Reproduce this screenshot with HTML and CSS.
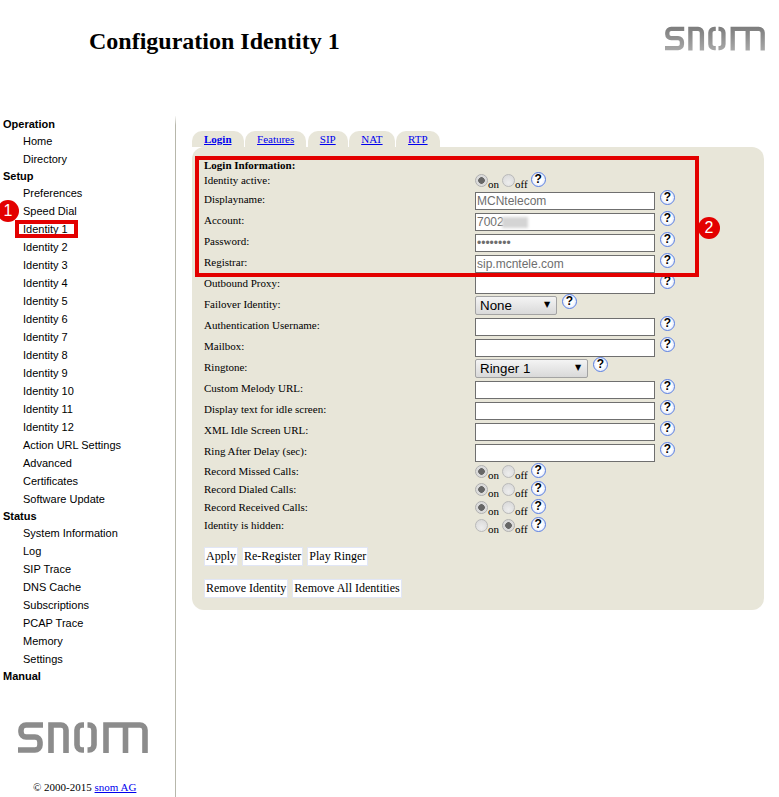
FILE: index.html
```html
<!DOCTYPE html>
<html lang="en">
<head>
<meta charset="utf-8">
<title>Configuration Identity 1</title>
<link rel="stylesheet" href="styles.css">
</head>
<body>
<svg class="defs" width="0" height="0" aria-hidden="true">
  <defs>
    <linearGradient id="fade" gradientUnits="userSpaceOnUse" x1="0" y1="0" x2="0" y2="31">
      <stop class="fade-start" offset="0"/>
      <stop class="fade-end" offset="1"/>
    </linearGradient>
  </defs>
  <symbol id="snom" viewBox="0 0 130 31">
    <path d="M25 3H8a5 5 0 0 0-5 5V10a5 5 0 0 0 5 5H17a5 5 0 0 1 5 5v3a5 5 0 0 1-5 5H0"/>
    <path d="M33 31V3H43a5 5 0 0 1 5 5V31"/>
    <path d="M66 3H64a5 5 0 0 0-5 5V23a5 5 0 0 0 5 5H66"/>
    <path d="M69.5 3H71a5 5 0 0 1 5 5V23a5 5 0 0 1-5 5H69.5"/>
    <path d="M88 31V3H122a5 5 0 0 1 5 5V31M107.5 3V31"/>
  </symbol>
</svg>
<header class="top">
  <h1 class="title">Configuration Identity 1</h1>
  <svg class="logo logo-top"><use href="#snom"/></svg>
</header>
<div class="layout">
  <aside class="sidebar">
    <nav class="nav">
      <div class="nav-head">Operation</div>
      <div class="nav-item">Home</div>
      <div class="nav-item">Directory</div>
      <div class="nav-head">Setup</div>
      <div class="nav-item">Preferences</div>
      <div class="nav-item">Speed Dial<span class="badge badge-one">1</span></div>
      <div class="nav-item nav-marked">Identity 1</div>
      <div class="nav-item">Identity 2</div>
      <div class="nav-item">Identity 3</div>
      <div class="nav-item">Identity 4</div>
      <div class="nav-item">Identity 5</div>
      <div class="nav-item">Identity 6</div>
      <div class="nav-item">Identity 7</div>
      <div class="nav-item">Identity 8</div>
      <div class="nav-item">Identity 9</div>
      <div class="nav-item">Identity 10</div>
      <div class="nav-item">Identity 11</div>
      <div class="nav-item">Identity 12</div>
      <div class="nav-item">Action URL Settings</div>
      <div class="nav-item">Advanced</div>
      <div class="nav-item">Certificates</div>
      <div class="nav-item">Software Update</div>
      <div class="nav-head">Status</div>
      <div class="nav-item">System Information</div>
      <div class="nav-item">Log</div>
      <div class="nav-item">SIP Trace</div>
      <div class="nav-item">DNS Cache</div>
      <div class="nav-item">Subscriptions</div>
      <div class="nav-item">PCAP Trace</div>
      <div class="nav-item">Memory</div>
      <div class="nav-item">Settings</div>
      <div class="nav-head">Manual</div>
    </nav>
    <svg class="logo logo-side"><use href="#snom"/></svg>
    <p class="copyright">© 2000-2015 <a href="#">snom AG</a></p>
  </aside>
  <main class="main">
    <div class="tabs">
      <a class="tab tab-active" href="#">Login</a>
      <a class="tab" href="#">Features</a>
      <a class="tab" href="#">SIP</a>
      <a class="tab" href="#">NAT</a>
      <a class="tab" href="#">RTP</a>
    </div>
    <section class="panel">
      <div class="marker"></div>
      <span class="badge badge-two">2</span>
      <div class="section-title">Login Information:</div>

      <div class="row row-radio"><span class="label">Identity active:</span><div class="value">
        <input class="radio" type="radio" name="r1" checked><span class="opt">on</span>
        <input class="radio" type="radio" name="r1"><span class="opt">off</span><span class="help">?</span></div></div>

      <div class="row"><span class="label">Displayname:</span><div class="value"><input class="text" type="text" value="MCNtelecom"><span class="help help-text">?</span></div></div>
      <div class="row"><span class="label">Account:</span><div class="value"><span class="field"><input class="text" type="text" value="7002"><span class="smudge"></span></span><span class="help help-text">?</span></div></div>
      <div class="row"><span class="label">Password:</span><div class="value"><input class="text" type="password" value="password"><span class="help help-text">?</span></div></div>
      <div class="row"><span class="label">Registrar:</span><div class="value"><input class="text" type="text" value="sip.mcntele.com"><span class="help help-text">?</span></div></div>
      <div class="row"><span class="label">Outbound Proxy:</span><div class="value"><input class="text" type="text"><span class="help help-text">?</span></div></div>
      <div class="row"><span class="label">Failover Identity:</span><div class="value"><select class="select select-short"><option>None</option></select><span class="help help-select">?</span></div></div>
      <div class="row"><span class="label">Authentication Username:</span><div class="value"><input class="text" type="text"><span class="help help-text">?</span></div></div>
      <div class="row"><span class="label">Mailbox:</span><div class="value"><input class="text" type="text"><span class="help help-text">?</span></div></div>
      <div class="row"><span class="label">Ringtone:</span><div class="value"><select class="select select-long"><option>Ringer 1</option></select><span class="help help-select">?</span></div></div>
      <div class="row"><span class="label">Custom Melody URL:</span><div class="value"><input class="text" type="text"><span class="help help-text">?</span></div></div>
      <div class="row"><span class="label">Display text for idle screen:</span><div class="value"><input class="text" type="text"><span class="help help-text">?</span></div></div>
      <div class="row"><span class="label">XML Idle Screen URL:</span><div class="value"><input class="text" type="text"><span class="help help-text">?</span></div></div>
      <div class="row"><span class="label">Ring After Delay (sec):</span><div class="value"><input class="text" type="text"><span class="help help-text">?</span></div></div>

      <div class="row row-radio"><span class="label">Record Missed Calls:</span><div class="value">
        <input class="radio" type="radio" name="r2" checked><span class="opt">on</span>
        <input class="radio" type="radio" name="r2"><span class="opt">off</span><span class="help">?</span></div></div>
      <div class="row row-radio"><span class="label">Record Dialed Calls:</span><div class="value">
        <input class="radio" type="radio" name="r3" checked><span class="opt">on</span>
        <input class="radio" type="radio" name="r3"><span class="opt">off</span><span class="help">?</span></div></div>
      <div class="row row-radio"><span class="label">Record Received Calls:</span><div class="value">
        <input class="radio" type="radio" name="r4" checked><span class="opt">on</span>
        <input class="radio" type="radio" name="r4"><span class="opt">off</span><span class="help">?</span></div></div>
      <div class="row row-radio"><span class="label">Identity is hidden:</span><div class="value">
        <input class="radio" type="radio" name="r5"><span class="opt">on</span>
        <input class="radio" type="radio" name="r5" checked><span class="opt">off</span><span class="help">?</span></div></div>

      <div class="actions">
        <button class="btn" type="button">Apply</button>
        <button class="btn" type="button">Re-Register</button>
        <button class="btn" type="button">Play Ringer</button>
      </div>
      <div class="actions actions-second">
        <button class="btn" type="button">Remove Identity</button>
        <button class="btn" type="button">Remove All Identities</button>
      </div>
    </section>
  </main>
</div>
</body>
</html>
```
FILE: styles.css
```css
*, *::before, *::after { box-sizing: border-box; }
html, body { margin: 0; padding: 0; height: 797px; overflow: hidden; background: #fff; }
body { font-family: "Liberation Serif", serif; font-size: 11px; color: #000; }
.defs { position: absolute; }
.fade-start { stop-color: #7c7c7c; }
.fade-end { stop-color: #a8a8a8; }

.top { height: 116px; display: flex; justify-content: space-between; align-items: flex-start; }
.title { margin: 27px 0 0 89px; font-size: 24px; line-height: 28px; font-weight: bold; }
.logo { display: block; fill: none; stroke: #8c8c8c; stroke-width: 5.6; }
.logo-top { width: 100px; height: 25px; margin: 26px 14px 0 0; stroke: url(#fade); }
.logo-side { width: 130px; height: 31px; margin: 38px 0 0 18px; }

.layout { display: flex; height: 681px; }
.sidebar { width: 176px; flex: none; border-right: 1px solid #b7b7ab; border-image: linear-gradient(#fff, #b7b7ab 10px) 1; }
.nav { font-family: "Liberation Sans", sans-serif; font-size: 11px; }
.nav-head { height: 16px; line-height: 16px; padding-left: 3px; font-weight: bold; }
.nav-item { height: 18px; line-height: 18px; padding-left: 23px; position: relative; }
.nav-marked::after { content: ""; position: absolute; left: 15px; top: 0; width: 63px; height: 18px; border: 4px solid #e30000; }
.badge { position: absolute; width: 22px; height: 22px; border-radius: 50%; background: #e30000; color: #fff;
  font-family: "Liberation Sans", sans-serif; font-size: 16px; line-height: 22px; text-align: center; font-weight: normal; }
.badge-one { left: -3px; top: -2px; }
.badge-two { left: 506px; top: 70px; }
.copyright { margin: 28px 0 0 33px; font-size: 11px; line-height: 13px; }
a { color: #0000ee; }

.main { padding-left: 16px; width: 588px; flex: none; }
.tabs { display: flex; gap: 1.5px; height: 31px; padding-top: 15px; }
.tab { height: 16px; padding: 2px 12px 0; line-height: 13px; background: #e8e6d9; border-radius: 10px 10px 0 0; }
.tab-active { font-weight: bold; }

.panel { position: relative; width: 572px; height: 463px; padding: 12px 12px 0; background: #e8e6d9; border-radius: 12px; }
.marker { position: absolute; left: 3px; top: 9px; width: 504px; height: 121px; border: 4px solid #e30000; z-index: 2; pointer-events: none; }
.section-title { height: 15px; line-height: 13px; font-weight: bold; }

.row { display: grid; grid-template-columns: 271px 1fr; height: 21px; line-height: 13px; }
.label { padding-top: 1px; }
.row-radio { height: 18px; }
.row-radio .label { padding-top: 0; }
.value { display: flex; align-items: flex-start; height: 100%; }
.field { position: relative; display: block; height: 18px; }
.text { display: block; width: 180px; height: 18px; margin: 0; padding: 0 1px; border: 1px solid #6f6f6f; background: #fff;
  font-family: "Liberation Sans", sans-serif; font-size: 12px; color: #6e6e6e; outline: none; }
.smudge { position: absolute; left: 27px; top: 4px; width: 26px; height: 11px; background: #d4d4d4; filter: blur(1.5px); }
.radio { appearance: none; -webkit-appearance: none; flex: none; width: 13px; height: 13px; margin: 0; border-radius: 50%;
  border: 1px solid #b9b9b9; background: radial-gradient(circle at 50% 70%, #ededed, #d6d6d6); }
.radio:checked { background: radial-gradient(circle, #666 0 3px, #d8d8d8 3.6px, #e6e6e6); border-color: #b0b0b0; }
.opt { margin: 4px 3px 0 0; }
.help { flex: none; display: block; width: 15px; height: 15px; margin: -2px 0 0 0; border: 1.5px solid #5b80e4; border-radius: 50%;
  background: radial-gradient(circle, #fff 40%, #d3ddf6); font-family: "Liberation Sans", sans-serif; font-size: 12px; line-height: 12px; font-weight: bold; text-align: center; color: #000; }
.help-text { margin-left: 5px; }
.help-select { margin-left: 5px; margin-top: -3px; }

.select { appearance: none; -webkit-appearance: none; display: block; height: 19px; margin: -1px 0 0; padding: 0 0 0 4px; border: 1px solid #a3a3a3; border-radius: 2px;
  background: linear-gradient(#f4f4f4, #d9d9d9); font-family: "Liberation Sans", sans-serif; font-size: 13.33px; color: #000; position: relative; }
.select-short { width: 82px; }
.select-long { width: 113px; }
.value:has(.select) { position: relative; }
.value:has(.select)::after { content: "▼"; position: absolute; top: 2px; font-family: "DejaVu Sans", sans-serif; font-size: 8px; line-height: 12px; }
.value:has(.select-short)::after { left: 69px; }
.value:has(.select-long)::after { left: 100px; }

.actions { display: flex; gap: 4px; margin-top: 10px; }
.actions-second { margin-top: 13px; }
.btn { height: 19px; margin: 0; padding: 0 1px; border: 1px solid #e1e6f6; background: #fff; font-family: "Liberation Serif", serif; font-size: 12px; line-height: 15px; color: #000; }
```
